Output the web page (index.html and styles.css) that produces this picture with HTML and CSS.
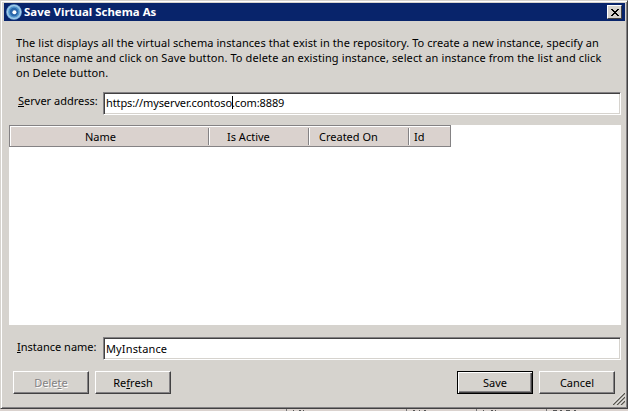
FILE: index.html
```html
<!DOCTYPE html>
<html lang="en">
<head>
<meta charset="utf-8">
<title>Save Virtual Schema As</title>
<link rel="stylesheet" href="styles.css">
</head>
<body>
<main class="dialog">
  <header class="titlebar">
    <svg class="logo" width="16" height="16" viewBox="0 0 16 16"><circle cx="8" cy="8" r="7.8" fill="#7db5df"/><circle cx="8" cy="8" r="6.3" fill="#4f94cc" stroke="#b5d8f0" stroke-width="1"/><circle cx="8" cy="8" r="4.2" fill="#2b68ab"/><circle cx="8.4" cy="8.2" r="2" fill="#fff"/></svg>
    <h1><span>Save Virtual Schema As</span></h1>
    <button class="close" aria-label="Close"><svg width="8" height="7" viewBox="0 0 8 7" shape-rendering="crispEdges"><path d="M0 0h2v1h1v1h2V1h1V0h2v1H7v1H6v1H5v1h1v1h1v1h1v1H6V6H5V5H3v1H2v1H0V6h1V5h1V4h1V3H2V2H1V1H0z"/></svg></button>
  </header>
  <div class="content">
    <p class="intro"><span class="line1">The list displays all the virtual schema instances that exist in the repository. To create a new instance, specify an</span><br><span class="line2">instance name and click on Save button. To delete an existing instance, select an instance from the list and click</span><br><span class="line3">on Delete button.</span></p>
    <div class="field server"><label><u>S</u>erver address:</label><div class="input"><span>https://myserver.contoso</span><i class="caret"></i><span>.com:8889</span></div></div>
    <div class="list">
      <div class="columns"><span>Name</span><span>Is Active</span><span>Created On</span><span>Id</span></div>
    </div>
    <div class="field instance"><label><u>I</u>nstance name:</label><div class="input"><span>MyInstance</span></div></div>
    <div class="actions">
      <button class="btn disabled"><span>Dele<u>t</u>e</span></button>
      <button class="btn"><span>Re<u>f</u>resh</span></button>
      <button class="btn primary"><span>Save</span></button>
      <button class="btn"><span>Cancel</span></button>
    </div>
  </div>
  <svg class="grip" width="12" height="12" viewBox="0 0 12 12" stroke-width="1.3"><path d="M0 12 12 0M4 12l8-8M8 12l4-4" stroke="#55534c"/><path d="M-1 11.5 11 -.5M3 11.5l9-9M7 11.5l5-5" stroke="#fff" stroke-width=".7"/></svg>
</main>
<div class="behind"></div>
</body>
</html>
```

FILE: styles.css
```css
* { box-sizing: border-box; }
body { margin: 0; width: 628px; height: 411px; overflow: hidden; background: #d6d3ce; color: #000; font: 11px/15px "Noto Sans", "Open Sans", sans-serif; }
button { font: inherit; color: inherit; padding: 0; margin: 0; border-radius: 0; }
u { text-underline-offset: 1px; text-decoration-thickness: 1px; }
.dialog { position: relative; width: 628px; height: 409px; background: #d6d3ce; border: 1px solid #d6d3ce; border-right-color: #424142; border-bottom-color: #424142; box-shadow: inset 1px 1px #fff, inset -1px -1px #848284; padding: 2px 2px 0 3px; }
.titlebar { display: flex; align-items: center; width: 621px; height: 18px; background: #08246b; padding: 0 3px 0 2px; }
.logo { flex: none; margin-right: 2px; }
h1 { flex: 1; margin: 0; color: #fff; font-size: 11.4px; letter-spacing: .03px; line-height: 18px; font-weight: 700; }
.close { display: flex; align-items: center; justify-content: center; width: 15px; height: 14px; background: #d6d3ce; border: 1px solid; border-color: #fff #424142 #424142 #fff; }
.content { padding: 14px 5px 0; }
.intro { margin: 0 0 0 7px; height: 57px; white-space: nowrap; }
.line1 { letter-spacing: .08px; }
.line2 { letter-spacing: .11px; }
.line3 { letter-spacing: .1px; }
.field { display: flex; height: 23px; width: 612px; white-space: nowrap; }
.field label { width: 94px; padding: 1px 0 0 9px; flex: none; }
.instance label { padding: 2px 0 0 8px; }
.input { display: flex; align-items: center; flex: 1; background: #fff; border: 1px solid; border-color: #848284 #fff #fff #848284; box-shadow: inset 1px 1px #424142, inset -1px -1px #d6d3ce; padding: 0 0 2px 2px; letter-spacing: -.11px; }
.instance .input { letter-spacing: .14px; padding-bottom: 0; }
.caret { width: 1px; height: 13px; background: #000; margin-right: -1px; }
.list { width: 612px; height: 200px; margin: 10px 0 12px; background: #fff; }
.columns { display: grid; grid-template-columns: 200px 100px 100px 40px; width: 442px; height: 22px; border: 1px solid #848284; background: #dad2ce; box-shadow: inset 1px 1px #fff; }
.columns span { position: relative; height: 20px; line-height: 22px; }
.columns span:nth-child(1) { padding-left: 75px; }
.columns span:nth-child(2) { padding-left: 17px; }
.columns span:nth-child(3) { padding-left: 9px; }
.columns span:nth-child(4) { padding-left: 4px; }
.columns span:not(:last-child)::after { content: ""; position: absolute; right: 0; top: 2px; width: 2px; height: 17px; background: linear-gradient(90deg, #848284 50%, #fff 50%); }
.actions { display: flex; gap: 6px; margin: 11px 0 0 4px; }
.btn { width: 76px; height: 23px; background: #d6d3ce; border: 1px solid; border-color: #fff #424142 #424142 #fff; box-shadow: inset -1px -1px #848284; line-height: 20px; }
.disabled { color: #848284; text-shadow: 1px 1px #fff; }
.primary { margin-left: 280px; border-color: #000; box-shadow: inset 1px 1px #fff, inset -1px -1px #424142, inset -2px -2px #848284; }
.grip { position: absolute; right: 2px; bottom: 3px; }
.behind { height: 2px; background: linear-gradient(#555, #555) 293px 1px/1px 1px no-repeat, linear-gradient(#555, #555) 299px 1px/2px 1px no-repeat, linear-gradient(#555, #555) 303px 1px/1px 1px no-repeat, linear-gradient(#555, #555) 413px 1px/2px 1px no-repeat, linear-gradient(#555, #555) 419px 1px/1px 1px no-repeat, linear-gradient(#555, #555) 424px 1px/2px 1px no-repeat, linear-gradient(#555, #555) 483px 1px/1px 1px no-repeat, linear-gradient(#555, #555) 491px 1px/2px 1px no-repeat, linear-gradient(#555, #555) 495px 1px/1px 1px no-repeat, linear-gradient(#555, #555) 553px 1px/4px 1px no-repeat, linear-gradient(#555, #555) 560px 1px/2px 1px no-repeat, linear-gradient(#555, #555) 566px 1px/4px 1px no-repeat, linear-gradient(#555, #555) 574px 1px/2px 1px no-repeat, linear-gradient(#777, #777) 286px 0/1px 2px no-repeat, linear-gradient(#777, #777) 406px 0/1px 2px no-repeat, linear-gradient(#777, #777) 476px 0/1px 2px no-repeat, linear-gradient(#777, #777) 546px 0/1px 2px no-repeat, #dad2ce; }
```
